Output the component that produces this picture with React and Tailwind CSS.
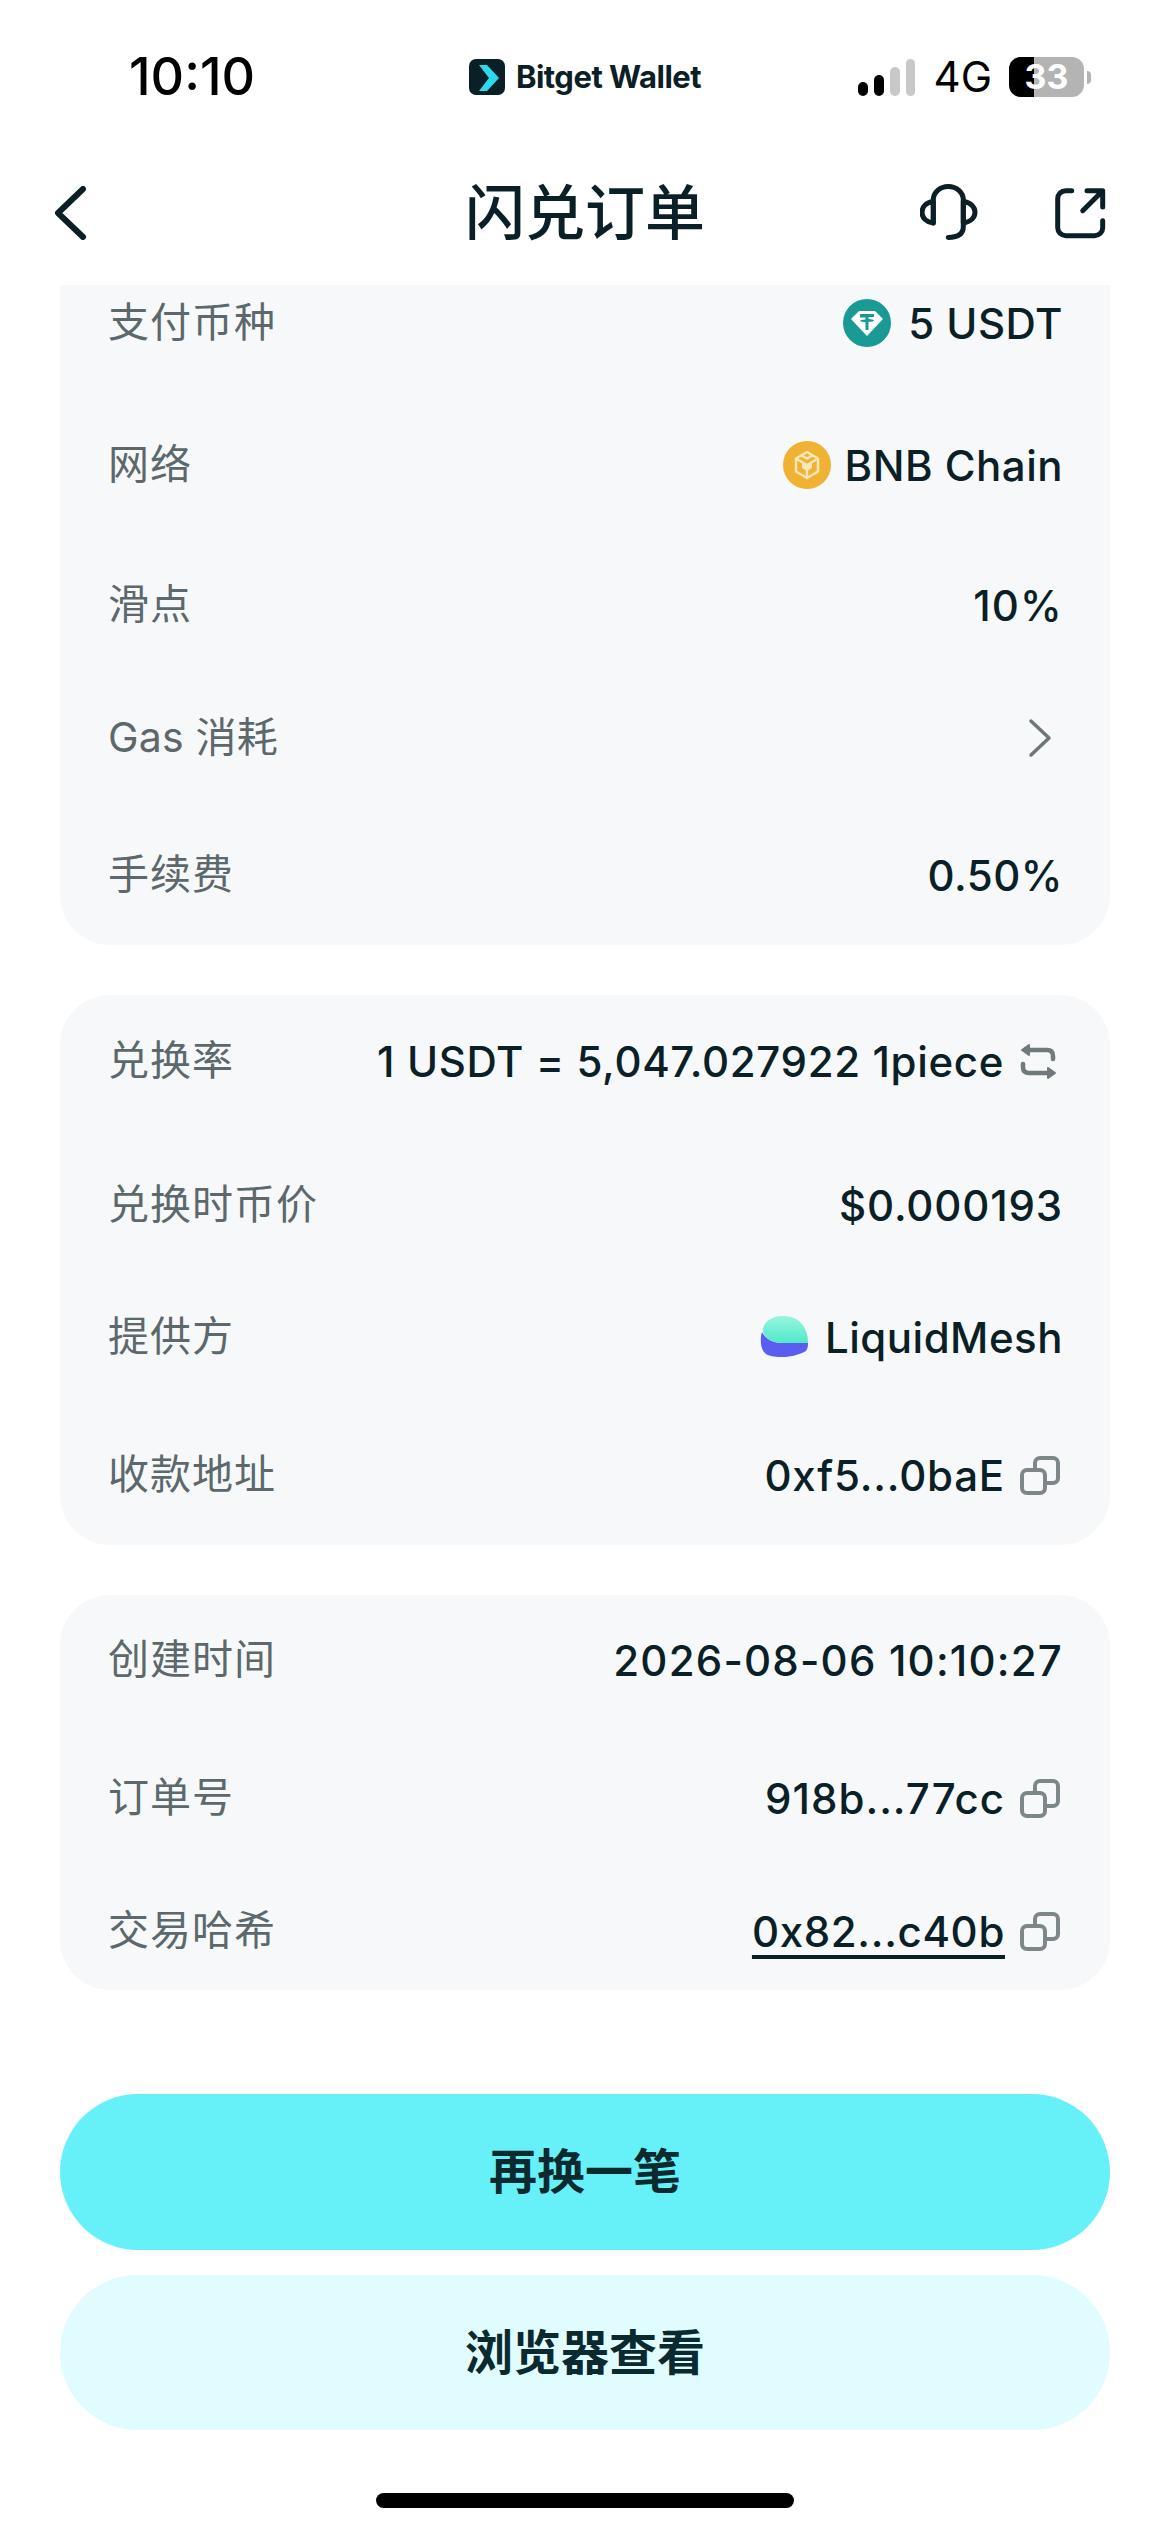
import React from 'react';

// Ícones desenhados a partir da referência
const Copy = () => (
  <svg width="40" height="39" viewBox="0 0 40 39" fill="none" stroke="#7d8688" strokeWidth="4" className="ml-[15px] mr-[3px] shrink-0">
    <rect x="2" y="14" width="23" height="23" rx="5" />
    <path d="M15 13V7a5 5 0 0 1 5-5h13a5 5 0 0 1 5 5v15a5 5 0 0 1-5 5h-7" />
  </svg>
);

const Swap = () => (
  <svg width="37" height="38" viewBox="0 0 37 38" fill="none" stroke="#70797b" strokeWidth="4.500" strokeLinecap="round" strokeLinejoin="round" className="ml-[16px] mr-[6px] shrink-0">
    <path d="M8 8h19q6 0 6 6v3" />
    <path d="M3 22v3q0 6 6 6h19" />
    <path d="M9 3 2 8l7 5zM28 26l7 5-7 5z" fill="#70797b" strokeWidth="2" />
  </svg>
);

const Tether = () => (
  <svg width="48" height="48" viewBox="0 0 48 48" className="mr-[17px] shrink-0">
    <circle cx="24" cy="24" r="24" fill="#1a9a94" />
    <path d="M16 12h16l8 8-16 17L8 20z" fill="#fff" />
    <path d="M17 15h14v3h-5.500v2c3 .2 5.500.7 5.500 1.400s-2.500 1.200-5.500 1.400V31h-3v-7.800c-3-.2-5.500-.7-5.500-1.400s2.500-1.200 5.500-1.400v-2H17z" fill="#1a9a94" />
  </svg>
);

const Bnb = () => (
  <svg width="48" height="48" viewBox="0 0 48 48" fill="none" stroke="#fbe7b8" strokeWidth="2.500" strokeLinejoin="round" className="mr-[14px] shrink-0">
    <circle cx="24" cy="24" r="24" fill="#f0b232" stroke="none" />
    <path d="M24 11l11 6.500v13L24 37l-11-6.500v-13z" />
    <path d="M13 17.500 24 24l11-6.500M24 24v13M18.500 14.300 24 17.500l5.500-3.200" />
    <path d="M19 21l5 3 5-3v6l-5 3-5-3z" fill="#fbe7b8" stroke="none" />
  </svg>
);

const Liquid = () => (
  <svg width="48" height="42" viewBox="0 0 48 42" className="mr-[17px] shrink-0">
    <defs>
      <linearGradient id="lm" x1="0" y1="0" x2="0" y2="1">
        <stop offset="0" stopColor="#9af5e0" />
        <stop offset="1" stopColor="#4fe9c8" />
      </linearGradient>
    </defs>
    <path d="M2 16C0 22 0 34 6 38c6 4 26 5 40-3 2-3 2-6 2-8H24C14 27 6 24 2 16z" fill="#5b5cf0" />
    <path d="M3 16C2 6 12 0 23 0c15 0 25 10 25 27H24C14 27 6 24 3 16z" fill="url(#lm)" />
  </svg>
);

const Row = ({ label, className = '', valueClass = 'tracking-[0.5px]', children }) => (
  <div className={`flex items-center justify-between h-[60px] ${className}`}>
    <span className="text-[41px] text-[#5c686b] tracking-[1px]">{label}</span>
    <div className={`flex items-center text-[42px] font-medium text-[#0a2026] ${valueClass}`}>{children}</div>
  </div>
);

export default function App() {
  return (
    <div className="flex flex-col w-[1170px] h-[2532px] bg-white overflow-hidden font-['Inter','Noto_Sans_CJK_SC',sans-serif]">
      {/* Barra de status */}
      <div className="grid grid-cols-[1fr_auto_1fr] items-center h-[78px] mt-[38px] text-black">
        <span className="pl-[129px] text-[52px] font-medium leading-none">10:10</span>
        <div className="flex items-center gap-[11px]">
          <svg width="36" height="36" viewBox="0 0 36 36">
            <rect width="36" height="36" rx="7" fill="#0a2026" />
            <path d="M10 6h8l12 13-12 13h-8l10-13z" fill="#2cd9ee" />
          </svg>
          <span className="text-[31px] font-bold text-[#0a2026] tracking-[-0.5px]">Bitget Wallet</span>
        </div>
        <div className="flex items-center justify-end pr-[79px]">
          <div className="flex items-end gap-[6px] h-[37px] mr-[19px]">
            <div className="w-[10px] h-[14px] rounded-full bg-black" />
            <div className="w-[10px] h-[21px] rounded-full bg-black" />
            <div className="w-[10px] h-[29px] rounded-full bg-[#c8c8c8]" />
            <div className="w-[9px] h-[37px] rounded-full bg-[#c8c8c8]" />
          </div>
          <span className="text-[42px] font-normal leading-none mr-[17px]">4G</span>
          <div className="relative flex items-center justify-center w-[75px] h-[40px] rounded-[12px] overflow-hidden bg-[#b4b4b4]">
            <div className="absolute left-0 top-0 bottom-0 w-[25px] bg-black" />
            <span className="relative text-[34px] font-bold text-white leading-none">33</span>
          </div>
          <div className="w-[4px] h-[13px] ml-[3px] rounded-r-full bg-[#b4b4b4]" />
        </div>
      </div>

      {/* Cabeçalho */}
      <div className="grid grid-cols-[1fr_auto_1fr] items-center h-[80px] mt-[52px] mb-[37px]">
        <div className="pl-[53px]">
          <svg width="34" height="54" viewBox="0 0 34 54" fill="none" stroke="#0a2026" strokeWidth="6" strokeLinecap="round" strokeLinejoin="round">
            <path d="M30 3 5 27l25 24" />
          </svg>
        </div>
        <span className="text-[60px] font-medium text-[#0a2026]">闪兑订单</span>
        <div className="flex items-center justify-end gap-[73px] pr-[63px]">
          <svg width="60" height="60" viewBox="0 0 60 60" fill="none" stroke="#0a2026" strokeWidth="5" strokeLinecap="round" strokeLinejoin="round">
            <path d="M13.300 40V17a15 13.500 0 0 1 30 0v27q0 10-15 10.500" />
            <path d="M13.300 18.500C6 19.500 2 24 2 29.300S6 39 13.300 40zM43.300 18.500C50.600 19.500 55 24 55 29.300S50.600 39 43.300 40z" />
          </svg>
          <svg width="54" height="54" viewBox="0 0 54 54" fill="none" stroke="#0a2026" strokeWidth="5" strokeLinecap="round" strokeLinejoin="round">
            <path d="M18.700 4.700h-6a8 8 0 0 0-8 8v29a8 8 0 0 0 8 8h29a8 8 0 0 0 8-8v-7" />
            <path d="M29.700 24.700 49 5.400M34 4.700h15.700V21" />
          </svg>
        </div>
      </div>

      <div className="flex flex-col gap-[50px] px-[60px]">
        <div className="bg-[#f6f8fa] rounded-b-[50px] pl-[48px] pr-[47px] pt-[8px] pb-[40px]">
          <Row label="支付币种"><Tether />5 USDT</Row>
          <Row label="网络" className="mt-[82px]"><Bnb />BNB Chain</Row>
          <Row label="滑点" className="mt-[80px]" valueClass="tracking-[1.2px]">10%</Row>
          <Row label={<span className="tracking-[0.2px]">Gas 消耗</span>} className="mt-[73px]">
            <svg width="24" height="40" viewBox="0 0 24 40" fill="none" stroke="#6d777a" strokeWidth="3.500" strokeLinecap="round" strokeLinejoin="round" className="mr-[11px]">
              <path d="M3 3l18 17L3 37" />
            </svg>
          </Row>
          <Row label="手续费" className="mt-[77px]">0.50%</Row>
        </div>

        <div className="bg-[#f6f8fa] rounded-[50px] pl-[48px] pr-[47px] pt-[36px] pb-[40px]">
          <Row label="兑换率" valueClass="tracking-[0.65px]">1 USDT = 5,047.027922 1piece<Swap /></Row>
          <Row label="兑换时币价" className="mt-[84px]" valueClass="tracking-[0.85px]">$0.000193</Row>
          <Row label="提供方" className="mt-[72px]"><Liquid />LiquidMesh</Row>
          <Row label="收款地址" className="mt-[78px]" valueClass="tracking-[0.8px]">0xf5...0baE<Copy /></Row>
        </div>

        <div className="bg-[#f6f8fa] rounded-[50px] pl-[48px] pr-[47px] pt-[35px] pb-[29px]">
          <Row label="创建时间" valueClass="tracking-[1.2px]">2026-08-06 10:10:27</Row>
          <Row label="订单号" className="mt-[78px]" valueClass="tracking-[1px]">918b...77cc<Copy /></Row>
          <Row label="交易哈希" className="mt-[73px]" valueClass="tracking-[0.65px]"><span className="underline underline-offset-[8px] decoration-[4px]">0x82...c40b</span><Copy /></Row>
        </div>
      </div>

      {/* Botões */}
      <div className="flex flex-col gap-[25px] px-[60px] mt-[104px]">
        <button className="h-[156px] rounded-full bg-[#66f0f7] text-[48px] font-semibold text-[#0a2a30]">再换一笔</button>
        <button className="h-[155px] rounded-full bg-[#e0fcff] text-[48px] font-semibold text-[#0a2a30]">浏览器查看</button>
      </div>

      <div className="w-[418px] h-[15px] mt-[63px] mx-auto rounded-full bg-black" />
    </div>
  );
}
